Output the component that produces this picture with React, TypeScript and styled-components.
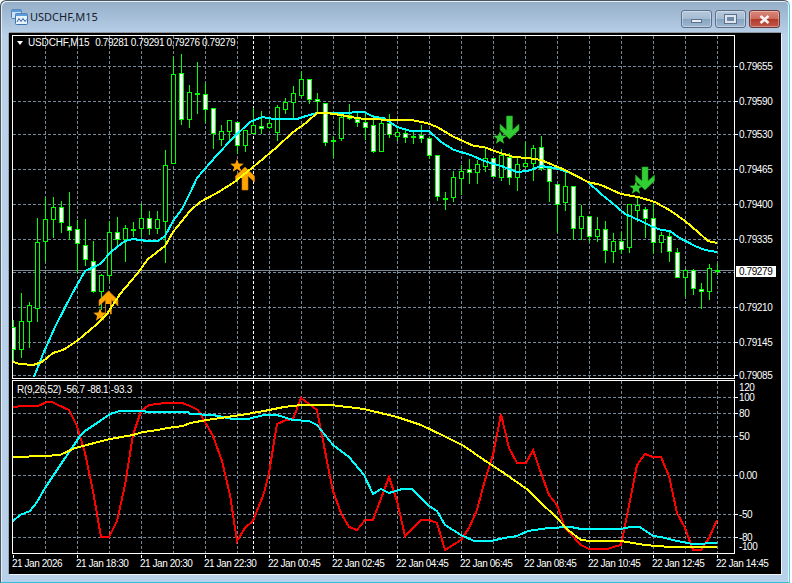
import styled, { createGlobalStyle } from 'styled-components';

type Candle = [number, number, number, number, number];
type Point = [number, number];

const GlobalStyle = createGlobalStyle`
  html, body {
    margin: 0;
    padding: 0;
    background: #ffffff;
  }
`;

// high, low, body top, body bottom, white(1) / hollow(0) / doji(2)
const candles: Candle[] = [
  [320, 361, 327, 349, 1], [293, 357, 321, 349, 0], [302, 347, 305, 321, 0], [218, 321, 242, 308, 0],
  [197, 261, 219, 241, 0], [197, 237, 207, 219, 0], [201, 232, 207, 222, 1], [192, 239, 226, 230, 1],
  [220, 272, 229, 243, 1], [219, 265, 245, 259, 1], [241, 292, 261, 291, 1], [274, 309, 275, 291, 0],
  [221, 280, 232, 275, 0], [217, 246, 232, 239, 1], [225, 261, 228, 239, 0], [222, 236, 229, 230, 2],
  [204, 236, 218, 228, 0], [211, 234, 218, 228, 1], [211, 233, 219, 228, 0], [150, 262, 165, 221, 0],
  [57, 163, 74, 163, 0], [54, 124, 73, 119, 1], [85, 127, 92, 119, 0], [62, 113, 93, 93, 2],
  [83, 122, 94, 109, 1], [108, 148, 108, 133, 1], [125, 145, 131, 139, 0], [120, 141, 120, 131, 0],
  [122, 153, 122, 145, 1], [130, 151, 130, 145, 0], [108, 133, 125, 133, 0], [111, 133, 126, 127, 1],
  [118, 128, 123, 127, 0], [105, 140, 107, 132, 0], [98, 113, 102, 109, 0], [86, 117, 93, 102, 0],
  [71, 97, 79, 95, 0], [79, 103, 79, 99, 1], [93, 111, 99, 101, 1], [103, 145, 103, 142, 1],
  [136, 157, 140, 140, 2], [112, 140, 117, 138, 0], [104, 119, 115, 118, 0], [113, 126, 119, 122, 1],
  [113, 139, 122, 127, 1], [115, 152, 125, 151, 1], [119, 151, 123, 151, 0], [114, 137, 123, 134, 1],
  [126, 140, 132, 136, 0], [128, 142, 133, 137, 1], [130, 143, 136, 136, 2], [125, 142, 135, 138, 1],
  [137, 158, 138, 155, 1], [155, 200, 155, 196, 1], [192, 209, 198, 198, 2], [171, 201, 177, 197, 0],
  [165, 194, 171, 178, 0], [159, 183, 169, 172, 1], [160, 183, 164, 172, 0], [148, 171, 158, 166, 0],
  [158, 176, 158, 176, 1], [149, 180, 155, 177, 0], [153, 184, 157, 177, 1], [157, 190, 164, 177, 0],
  [142, 167, 163, 166, 0], [145, 180, 148, 163, 0], [136, 170, 147, 168, 1], [168, 201, 168, 181, 1],
  [184, 232, 184, 204, 1], [171, 210, 186, 202, 0], [186, 239, 186, 228, 1], [205, 239, 216, 228, 0],
  [216, 241, 216, 236, 1], [217, 241, 229, 236, 0], [221, 262, 229, 250, 1], [233, 262, 241, 251, 0],
  [232, 253, 241, 249, 1], [204, 252, 204, 247, 0], [198, 221, 205, 210, 0], [207, 237, 209, 218, 1],
  [201, 253, 218, 242, 1], [232, 252, 235, 242, 0], [232, 261, 236, 251, 1], [248, 277, 252, 277, 1],
  [269, 296, 270, 277, 0], [269, 294, 270, 288, 1], [283, 308, 289, 291, 1], [264, 299, 268, 291, 0],
  [263, 274, 270, 270, 2],
];

const mainCyan: Point[] = [
  [34, 377], [43, 354], [55, 327], [72, 294], [85, 271], [100, 264], [112, 251], [125, 241], [133, 239],
  [147, 241], [158, 241], [165, 236], [173, 221], [182, 209], [190, 193], [197, 178], [217, 155], [233, 138],
  [250, 122], [262, 117], [274, 119], [297, 119], [306, 116], [317, 113], [341, 113], [364, 112], [374, 117],
  [384, 118], [397, 127], [411, 131], [429, 131], [441, 142], [454, 150], [471, 155], [484, 161], [501, 166],
  [517, 172], [528, 171], [541, 166], [555, 168], [568, 172], [588, 182], [601, 194], [611, 202], [625, 214],
  [641, 221], [651, 226], [661, 230], [670, 231], [678, 237], [695, 246], [705, 250], [717, 252],
];

const mainYellow: Point[] = [
  [13, 362], [20, 364], [33, 365], [42, 362], [53, 353], [63, 350], [77, 341], [97, 324], [107, 314], [120, 294],
  [137, 274], [148, 259], [165, 246], [173, 232], [190, 211], [200, 202], [217, 193], [233, 183], [247, 172],
  [264, 158], [277, 147], [292, 133], [307, 122], [317, 113], [327, 113], [341, 115], [351, 117], [364, 119],
  [397, 120], [411, 120], [427, 123], [437, 127], [454, 137], [474, 146], [484, 147], [497, 152], [514, 157],
  [528, 158], [541, 160], [565, 170], [588, 182], [601, 185], [621, 194], [638, 197], [655, 202], [671, 211],
  [685, 221], [698, 232], [708, 241], [717, 243],
];

const subRed: Point[] = [
  [13, 407], [23, 406], [38, 406], [47, 402], [52, 402], [58, 405], [69, 410], [77, 426], [85, 453], [93, 491],
  [101, 537], [109, 537], [117, 521], [125, 485], [133, 435], [141, 411], [149, 405], [165, 403], [182, 403],
  [190, 406], [198, 410], [213, 436], [222, 461], [230, 495], [237, 541], [245, 528], [253, 521], [264, 493],
  [269, 473], [277, 424], [286, 420], [293, 419], [301, 398], [317, 410], [326, 456], [333, 491], [341, 513],
  [349, 527], [357, 530], [365, 520], [373, 520], [389, 477], [397, 501], [405, 536], [421, 520], [429, 520],
  [437, 523], [445, 550], [461, 540], [469, 528], [477, 510], [485, 480], [493, 455], [501, 414], [509, 448],
  [517, 463], [526, 463], [533, 450], [541, 473], [549, 495], [557, 505], [565, 528], [581, 545], [589, 549],
  [608, 549], [613, 547], [621, 545], [629, 506], [637, 465], [645, 454], [653, 457], [661, 457], [669, 476],
  [677, 513], [685, 528], [693, 550], [701, 550], [709, 538], [717, 520],
];

const subCyan: Point[] = [
  [13, 521], [20, 515], [30, 511], [37, 502], [45, 488], [53, 476], [63, 461], [72, 448], [80, 436], [85, 431],
  [100, 421], [110, 414], [120, 411], [143, 411], [148, 412], [188, 412], [190, 414], [213, 415], [223, 417],
  [233, 419], [248, 419], [264, 415], [277, 415], [293, 420], [309, 421], [317, 425], [333, 445], [349, 457],
  [364, 475], [373, 494], [381, 489], [389, 493], [402, 489], [412, 489], [429, 506], [437, 511], [445, 525],
  [461, 535], [474, 541], [491, 541], [504, 538], [517, 536], [528, 531], [548, 528], [571, 527], [581, 529],
  [621, 529], [630, 527], [640, 527], [653, 536], [661, 537], [677, 541], [693, 544], [717, 543],
];

const subYellow: Point[] = [
  [13, 457], [45, 456], [60, 455], [75, 448], [110, 439], [133, 435], [143, 432], [158, 430], [167, 428],
  [183, 426], [190, 423], [207, 420], [227, 417], [247, 414], [264, 411], [284, 407], [301, 405], [331, 405],
  [364, 409], [397, 417], [421, 425], [444, 436], [464, 446], [484, 460], [504, 473], [528, 490], [541, 503],
  [555, 516], [568, 530], [581, 540], [591, 541], [621, 541], [645, 545], [670, 547], [717, 547],
];

const priceLevels: [number, string][] = [
  [66, '0.79655'], [101, '0.79590'], [134, '0.79530'], [169, '0.79465'], [204, '0.79400'],
  [239, '0.79335'], [307, '0.79210'], [342, '0.79145'], [375, '0.79085'],
];
const gridPriceRows = [66, 101, 134, 169, 204, 239, 272, 307, 342, 375];

const subLevels: [number, string, boolean][] = [
  [387, '120', false], [397, '100', true], [413, '80', true], [436, '50', true], [475, '0.00', true],
  [514, '-50', true], [537, '-80', true], [546, '-100', false],
];

const timeLabels = [
  '21 Jan 2026', '21 Jan 18:30', '21 Jan 20:30', '21 Jan 22:30', '22 Jan 00:45', '22 Jan 02:45',
  '22 Jan 04:45', '22 Jan 06:45', '22 Jan 08:45', '22 Jan 10:45', '22 Jan 12:45', '22 Jan 14:45',
];

const gridColumns = Array.from({ length: 22 }, (_, i) => 45 + 32 * i);
const toPoints = (pts: Point[]) => pts.map(p => p.join(',')).join(' ');

function star(cx: number, cy: number, r: number) {
  const pts: string[] = [];
  for (let i = 0; i < 10; i++) {
    const rad = i % 2 === 0 ? r : r * 0.42;
    const a = -Math.PI / 2 + (i * Math.PI) / 5;
    pts.push(`${(cx + rad * Math.cos(a)).toFixed(1)},${(cy + rad * Math.sin(a)).toFixed(1)}`);
  }
  return pts.join(' ');
}

// dir 1 = pointing up, -1 = pointing down; tip is the y of the point
function arrow(cx: number, tip: number, dir: 1 | -1) {
  const shape: Point[] = [
    [0, 0], [9.5, 9], [9.5, 15], [3, 9], [3, 23], [-3, 23], [-3, 9], [-9.5, 15], [-9.5, 9],
  ];
  return shape.map(([x, y]) => `${cx + x},${tip + dir * y}`).join(' ');
}

function Grid({ rows, top, bottom }: { rows: number[]; top: number; bottom: number }) {
  return (
    <>
      {rows.map(y => (
        <GridLine key={y} x1={13} x2={734} y1={y + 0.5} y2={y + 0.5} />
      ))}
      {gridColumns.map(x => (
        <GridLine key={x} x1={x + 0.5} x2={x + 0.5} y1={top} y2={bottom} />
      ))}
      <SeparatorLine x1={253.5} x2={253.5} y1={top} y2={bottom} />
    </>
  );
}

function CandleMark({ data, index }: { data: Candle; index: number }) {
  const [high, low, top, bottom, kind] = data;
  const x = 13 + 8 * index;
  return (
    <g>
      <Wick x={x} y={high} width={1} height={low - high + 1} />
      {kind === 2 ? (
        <Wick x={x - 2} y={top} width={5} height={2} />
      ) : (
        <CandleBody
          x={x - 1.5}
          y={top + 0.5}
          width={4}
          height={Math.max(bottom - top, 2)}
          $white={kind === 1}
        />
      )}
    </g>
  );
}

export default function App() {
  return (
    <Desktop>
      <GlobalStyle />
      <Window>
        <TitleBar>
          <AppIcon width="17" height="16" viewBox="0 0 17 16">
            <rect x="0.5" y="0.5" width="10" height="9" rx="1" fill="#cfe3f7" stroke="#4d7fb8" />
            <rect x="0.5" y="0.5" width="10" height="2.5" fill="#5f9ad6" />
            <rect x="4.5" y="4.5" width="12" height="11" rx="1" fill="#e8f2fb" stroke="#3f74b0" />
            <rect x="4.5" y="4.5" width="12" height="2.5" fill="#5f9ad6" />
            <path d="M6 13 L8 9.5 L10 12.5 L12 9.5 L14 12.5 L15.5 10.5" fill="none" stroke="#2b5c98" strokeWidth="1" />
          </AppIcon>
          <Title>USDCHF,M15</Title>
          <WindowButtons>
            <CaptionButton>
              <MinimizeGlyph />
            </CaptionButton>
            <CaptionButton>
              <MaximizeGlyph />
            </CaptionButton>
            <CloseButton>
              <svg width="11" height="9" viewBox="0 0 11 9">
                <path d="M1.5 1 L9.5 8 M9.5 1 L1.5 8" stroke="#f4f4f4" strokeWidth="2.6" />
              </svg>
            </CloseButton>
          </WindowButtons>
        </TitleBar>
        <Client>
          <PaneRow $height={344}>
            <Plot>
              <PlotSvg viewBox="12 35 723 344" width="723" height="344">
                <PaneFrame x={12.5} y={35.5} width={722} height={343} />
                <Grid rows={gridPriceRows} top={36} bottom={378} />
                <BidLine x1={13} x2={734} y1={270.5} y2={270.5} />
                {candles.map((c, i) => (
                  <CandleMark key={i} data={c} index={i} />
                ))}
                <polygon points={star(100, 315, 7)} fill="#ffa500" />
                <polygon points={arrow(108.5, 291, 1)} fill="#ffa500" stroke="#d9780f" strokeWidth="0.6" />
                <ArrowGap x={106} y={304} width={4} height={11} />
                <polygon points={star(237, 166, 7)} fill="#ffa500" />
                <polygon points={arrow(245, 167, 1)} fill="#ffa500" stroke="#d9780f" strokeWidth="0.6" />
                <polygon points={star(500, 138, 7)} fill="#32cd32" />
                <polygon points={arrow(509.5, 139, -1)} fill="#32cd32" stroke="#1f9a1f" strokeWidth="0.6" />
                <polygon points={star(636, 188, 7)} fill="#32cd32" />
                <polygon points={arrow(645, 190, -1)} fill="#32cd32" stroke="#1f9a1f" strokeWidth="0.6" />
                <IndicatorLine points={toPoints(mainCyan)} stroke="#00ffff" />
                <IndicatorLine points={toPoints(mainYellow)} stroke="#ffff00" />
              </PlotSvg>
              <Legend>
                <LegendArrow />
                <span>USDCHF,M15</span>
                <LegendValues>0.79281 0.79291 0.79276 0.79279</LegendValues>
              </Legend>
            </Plot>
            <Axis>
              {priceLevels.map(([y, text]) => (
                <AxisLabel key={text} style={{ top: y - 35 - 4 }}>
                  <Tick />
                  {text}
                </AxisLabel>
              ))}
              <BidTag style={{ top: 266 - 35 }}>0.79279</BidTag>
            </Axis>
          </PaneRow>
          <PaneRow $height={174}>
            <Plot>
              <PlotSvg viewBox="12 380 723 174" width="723" height="174">
                <PaneFrame x={12.5} y={380.5} width={722} height={173} />
                <Grid rows={[397, 413, 436, 475, 514, 537]} top={381} bottom={553} />
                <IndicatorLine points={toPoints(subRed)} stroke="#ff0000" />
                <IndicatorLine points={toPoints(subCyan)} stroke="#00ffff" />
                <IndicatorLine points={toPoints(subYellow)} stroke="#ffff00" />
              </PlotSvg>
              <SubLegend>R(9,26,52) -56.7 -88.1 -93.3</SubLegend>
            </Plot>
            <Axis>
              {subLevels.map(([y, text, tick]) => (
                <AxisLabel key={text} style={{ top: y - 380 - 4 }}>
                  {tick && <Tick />}
                  {text}
                </AxisLabel>
              ))}
            </Axis>
          </PaneRow>
          <TimeAxis>
            {timeLabels.map(t => (
              <TimeLabel key={t}>
                <TimeTick />
                {t}
              </TimeLabel>
            ))}
          </TimeAxis>
        </Client>
      </Window>
    </Desktop>
  );
}

const Desktop = styled.div`
  width: 792px;
  height: 583px;
  overflow: hidden;
  background: #ffffff;
  font-family: 'Liberation Sans', Arial, sans-serif;
`;

const Window = styled.div`
  box-sizing: border-box;
  width: 790px;
  height: 583px;
  display: flex;
  flex-direction: column;
  border: 1px solid #4a5560;
  border-bottom-color: #35c0d8;
  border-right-color: #5cc8dc;
  border-top-left-radius: 6px;
  border-top-right-radius: 6px;
  box-shadow: inset 1px 1px 0 #e6eef6, inset -1px 0 0 #e6f2fa;
  background: linear-gradient(180deg, #95aec8 0%, #b9d1e9 6%, #b8d0e9 100%);
  padding: 0 8px 8px 8px;
`;

const TitleBar = styled.div`
  height: 31px;
  flex: none;
  display: flex;
  align-items: center;
  padding-left: 2px;
  border-bottom: 1px solid #8f969c;
`;

const AppIcon = styled.svg`
  flex: none;
  margin-right: 2px;
`;

const Title = styled.span`
  font-family: 'Noto Sans', Arial, sans-serif;
  font-size: 11px;
  color: #14202e;
`;

const WindowButtons = styled.div`
  margin-left: auto;
  margin-right: 1px;
  margin-top: 5px;
  display: flex;
  gap: 3px;
`;

const CaptionButton = styled.div`
  box-sizing: border-box;
  width: 31px;
  height: 18px;
  display: flex;
  align-items: center;
  justify-content: center;
  border: 1px solid #5e7089;
  border-radius: 3px;
  box-shadow: inset 0 0 0 1px rgba(255, 255, 255, 0.35);
  background: linear-gradient(180deg, #b6c9dd 0%, #a5bbd2 48%, #86a3c0 52%, #9fb8d1 100%);
`;

const CloseButton = styled(CaptionButton)`
  border-color: #6b3a38;
  background: linear-gradient(180deg, #d9897c 0%, #cc6a5c 48%, #b13a2a 52%, #c2584a 100%);
`;

const MinimizeGlyph = styled.div`
  width: 11px;
  height: 4px;
  margin-top: 3px;
  box-sizing: border-box;
  background: #e8eef4;
  border: 1px solid #5e7089;
`;

const MaximizeGlyph = styled.div`
  width: 11px;
  height: 8px;
  box-sizing: border-box;
  background: #6f8aa6;
  border: 2px solid #dde6ef;
  outline: 1px solid #5e7089;
`;

const Client = styled.div`
  flex: 1;
  display: flex;
  flex-direction: column;
  background: #000000;
  color: #ffffff;
  padding: 2px 0 0 3px;
  box-shadow: 1px 1px 0 #eef4fa, -1px 0 0 #98a6b4;
`;

const PaneRow = styled.div<{ $height: number }>`
  height: ${p => p.$height}px;
  flex: none;
  display: flex;
  margin-bottom: 1px;
`;

const Plot = styled.div`
  position: relative;
  width: 723px;
  flex: none;
`;

const PlotSvg = styled.svg`
  display: block;
  background: #000000;
`;

const PaneFrame = styled.rect`
  fill: none;
  stroke: #ffffff;
  stroke-width: 1;
  shape-rendering: crispEdges;
`;

const GridLine = styled.line`
  stroke: #778899;
  stroke-width: 1;
  stroke-dasharray: 3 2;
  shape-rendering: crispEdges;
`;

const SeparatorLine = styled(GridLine)`
  stroke: #ffffff;
`;

const BidLine = styled.line`
  stroke: #778899;
  stroke-width: 1;
  shape-rendering: crispEdges;
`;

const Wick = styled.rect`
  fill: #00ff00;
  shape-rendering: crispEdges;
`;

const CandleBody = styled.rect<{ $white: boolean }>`
  fill: ${p => (p.$white ? '#ffffff' : '#000000')};
  stroke: #00ff00;
  stroke-width: 1;
  shape-rendering: crispEdges;
`;

const ArrowGap = styled.rect`
  fill: #000000;
`;

const IndicatorLine = styled.polyline`
  fill: none;
  stroke-width: 2;
  stroke-linejoin: miter;
  shape-rendering: crispEdges;
`;

const Legend = styled.div`
  position: absolute;
  top: 2px;
  left: 5px;
  display: flex;
  align-items: center;
  font-size: 10px;
  letter-spacing: -0.15px;
  line-height: 12px;
  white-space: nowrap;
`;

const LegendArrow = styled.i`
  width: 0;
  height: 0;
  margin-right: 5px;
  border-left: 3.5px solid transparent;
  border-right: 3.5px solid transparent;
  border-top: 4px solid #ffffff;
`;

const LegendValues = styled.span`
  margin-left: 6px;
  letter-spacing: -0.42px;
`;

const SubLegend = styled.div`
  position: absolute;
  top: 4px;
  left: 5px;
  font-size: 10px;
  letter-spacing: -0.32px;
  line-height: 12px;
  white-space: nowrap;
`;

const Axis = styled.div`
  position: relative;
  flex: 1;
`;

const AxisLabel = styled.div`
  position: absolute;
  left: 4px;
  font-size: 10px;
  line-height: 9px;
  letter-spacing: -0.4px;
  white-space: nowrap;
`;

const Tick = styled.i`
  position: absolute;
  left: -4px;
  top: 4px;
  width: 3px;
  height: 1px;
  background: #ffffff;
`;

const BidTag = styled.div`
  position: absolute;
  left: 1px;
  width: 40px;
  height: 11px;
  box-sizing: border-box;
  padding-left: 3px;
  background: #ffffff;
  color: #000000;
  font-size: 10px;
  line-height: 11px;
  letter-spacing: -0.4px;
`;

const TimeAxis = styled.div`
  display: flex;
  padding-top: 2px;
`;

const TimeLabel = styled.div`
  position: relative;
  width: 64px;
  flex: none;
  padding-top: 1px;
  font-size: 10px;
  line-height: 12px;
  letter-spacing: -0.45px;
  white-space: nowrap;
`;

const TimeTick = styled.i`
  position: absolute;
  left: 1px;
  top: -2px;
  width: 1px;
  height: 3px;
  background: #ffffff;
`;
